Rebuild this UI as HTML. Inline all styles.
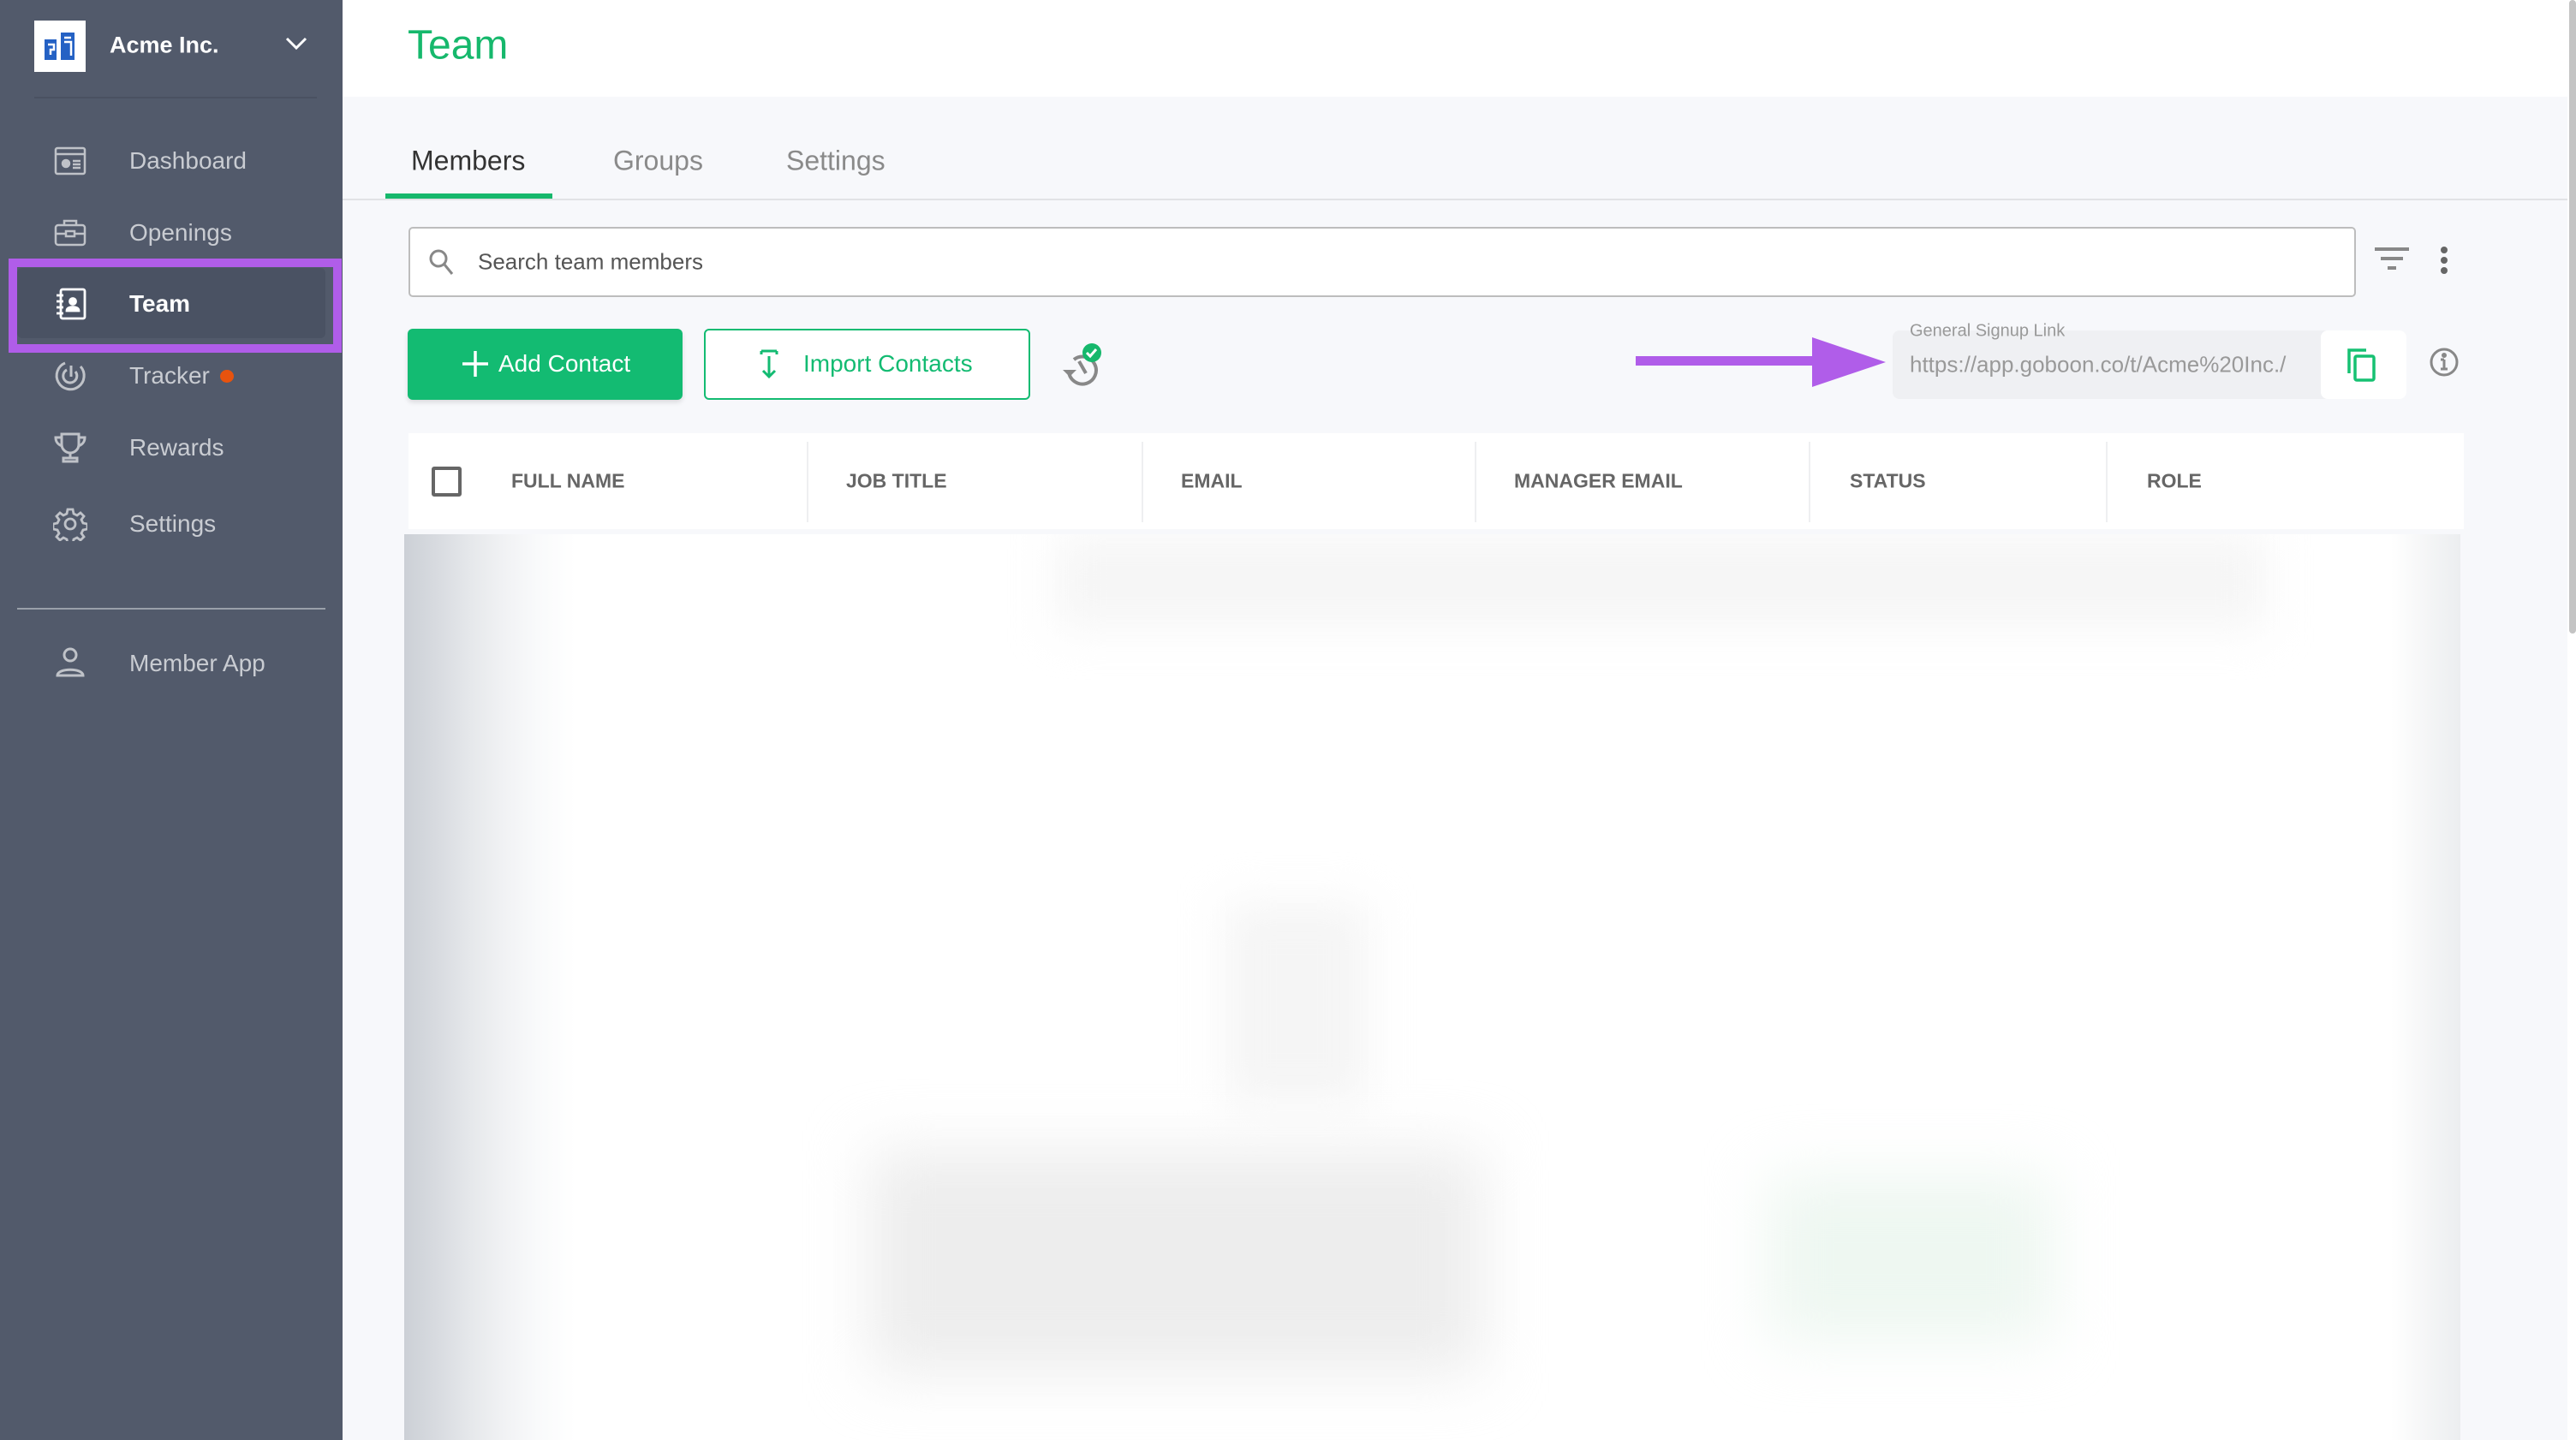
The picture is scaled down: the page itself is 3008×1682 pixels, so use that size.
<!DOCTYPE html>
<html><head><meta charset="utf-8"><style>
*{margin:0;padding:0;box-sizing:border-box}
body{width:3008px;height:1682px;overflow:hidden;background:#f7f8fb;font-family:"Liberation Sans",sans-serif;position:relative}
.a{position:absolute}
.sb{left:0;top:0;width:400px;height:1682px;background:#525a6b}
.nav{position:absolute;left:151px;font-size:28px;color:#c9ccd2;transform:translateY(-50%)}
.ic{position:absolute;left:62px;width:40px;height:40px;transform:translateY(-50%)}
.th{position:absolute;top:562px;font-size:23px;font-weight:bold;color:#666;transform:translateY(-50%)}
.dv{position:absolute;top:516px;width:2px;height:94px;background:#eeeff1}
</style></head><body>
<div class="a sb"></div>
<div class="a" style="left:40px;top:24px;width:60px;height:60px;background:#fff"></div>
<svg class="a" style="left:48px;top:30px" width="44" height="48" viewBox="0 0 44 48"><rect x="4" y="16" width="14" height="24" fill="#2461c4"/><rect x="23" y="8" width="16" height="32" fill="#2461c4"/><path d="M8 22h7v6h-4v6M27 14h8M27 19h8v16" stroke="#fff" stroke-width="2.5" fill="none"/></svg>
<div class="a" style="left:128px;top:53px;transform:translateY(-50%);font-size:27px;font-weight:bold;color:#fff">Acme Inc.</div>
<svg class="a" style="left:333px;top:42px" width="26" height="18"><path d="M2 3l11 11 11-11" stroke="#fff" stroke-width="3" fill="none"/></svg>
<div class="a" style="left:40px;top:113px;width:330px;height:2px;background:#4a5161"></div>
<div class="a" style="left:10px;top:302px;width:389px;height:110px;border:10px solid #b05de9"></div>
<div class="a" style="left:20px;top:313px;width:360px;height:82px;background:#4a5263;border-radius:6px"></div>
<svg class="ic" style="top:188px" viewBox="0 0 40 40" fill="none" stroke="#bfc2c8" stroke-width="2.5"><rect x="3" y="5" width="34" height="30" rx="2"/><path d="M3 12h34"/><circle cx="15" cy="23" r="4" fill="#bfc2c8"/><path d="M23 20h9M23 24h9M23 28h9"/></svg>
<div class="nav" style="top:188px">Dashboard</div>
<svg class="ic" style="top:272px" viewBox="0 0 40 40" fill="none" stroke="#bfc2c8" stroke-width="2.5"><rect x="3" y="11" width="34" height="23" rx="3"/><path d="M13 11V6h14v5M3 21h34"/><rect x="15" y="18" width="10" height="6" fill="#525a6b"/></svg>
<div class="nav" style="top:272px">Openings</div>
<svg class="ic" style="top:355px" viewBox="0 0 40 40" fill="none" stroke="#fff" stroke-width="2.8"><rect x="9" y="3" width="28" height="34" rx="2"/><path d="M4 10h8M4 17h8M4 24h8M4 31h8"/><circle cx="23" cy="17" r="3.5" fill="#fff"/><path d="M16 28c0-6 14-6 14 0z" fill="#fff"/></svg>
<div class="nav" style="top:355px;color:#fff;font-weight:bold">Team</div>
<svg class="ic" style="top:439px" viewBox="0 0 40 40" fill="none" stroke="#bfc2c8" stroke-width="3"><path d="M14 5A16 16 0 1 0 32 9"/><path d="M16 13A8 8 0 1 0 26 15"/><path d="M21 8v13"/></svg>
<div class="nav" style="top:439px">Tracker</div>
<div class="a" style="left:257px;top:432px;width:16px;height:15px;border-radius:50%;background:#e8530e"></div>
<svg class="ic" style="top:523px" viewBox="0 0 40 40" fill="none" stroke="#bfc2c8" stroke-width="3"><path d="M10 4h20v12a10 10 0 0 1-20 0z"/><path d="M10 8H3c0 6 4 9 8 10M30 8h7c0 6-4 9-8 10M20 26v6M12 36h16v-4H12z"/></svg>
<div class="nav" style="top:523px">Rewards</div>
<svg class="ic" style="top:612px" viewBox="0 0 40 40" fill="none" stroke="#bfc2c8" stroke-width="2.8"><path d="M17 3h6l1 5 4 2 4-3 4 4-3 4 2 4 5 1v6l-5 1-2 4 3 4-4 4-4-3-4 2-1 5h-6l-1-5-4-2-4 3-4-4 3-4-2-4-5-1v-6l5-1 2-4-3-4 4-4 4 3 4-2z"/><circle cx="20" cy="20" r="6"/></svg>
<div class="nav" style="top:612px">Settings</div>
<div class="a" style="left:20px;top:710px;width:360px;height:2px;background:#9aa0aa"></div>
<svg class="ic" style="top:774px" viewBox="0 0 40 40" fill="none" stroke="#bfc2c8" stroke-width="3"><circle cx="20" cy="11" r="7"/><path d="M5 35c0-9 30-9 30 0z"/></svg>
<div class="nav" style="top:775px">Member App</div>

<div class="a" style="left:400px;top:0;width:2598px;height:113px;background:#fff"></div>
<div class="a" style="left:476px;top:53px;transform:translateY(-50%);font-size:48px;color:#16b86c">Team</div>
<div class="a" style="left:480px;top:188px;transform:translateY(-50%);font-size:32px;color:#333">Members</div>
<div class="a" style="left:716px;top:188px;transform:translateY(-50%);font-size:32px;color:#8a8a8a">Groups</div>
<div class="a" style="left:918px;top:188px;transform:translateY(-50%);font-size:32px;color:#8a8a8a">Settings</div>
<div class="a" style="left:400px;top:232px;width:2598px;height:2px;background:#e2e3e6"></div>
<div class="a" style="left:450px;top:226px;width:195px;height:6px;background:#16b86c"></div>
<div class="a" style="left:477px;top:265px;width:2274px;height:82px;background:#fff;border:2px solid #bdbdbd;border-radius:5px"></div>
<svg class="a" style="left:500px;top:290px" width="32" height="34" fill="none" stroke="#888" stroke-width="3"><circle cx="12" cy="12" r="9"/><path d="M19 19l9 11"/></svg>
<div class="a" style="left:558px;top:306px;transform:translateY(-50%);font-size:26px;color:#555">Search team members</div>
<svg class="a" style="left:2773px;top:288px" width="40" height="30"><rect x="0" y="1" width="40" height="4" fill="#888"/><rect x="7" y="12" width="26" height="4" fill="#888"/><rect x="15" y="23" width="10" height="4" fill="#888"/></svg>
<svg class="a" style="left:2848px;top:286px" width="12" height="36" fill="#666"><circle cx="6" cy="6" r="4"/><circle cx="6" cy="18" r="4"/><circle cx="6" cy="30" r="4"/></svg>

<div class="a" style="left:476px;top:384px;width:321px;height:83px;background:#13bb72;border-radius:6px;box-shadow:0 3px 6px rgba(0,0,0,.12)"></div>
<svg class="a" style="left:540px;top:410px" width="30" height="30" stroke="#fff" stroke-width="3.5"><path d="M15 0v30M0 15h30"/></svg>
<div class="a" style="left:582px;top:425px;transform:translateY(-50%);font-size:28px;color:#fff">Add Contact</div>
<div class="a" style="left:822px;top:384px;width:381px;height:83px;background:#fff;border:2px solid #13bb72;border-radius:6px"></div>
<svg class="a" style="left:886px;top:408px" width="24" height="34" fill="none" stroke="#13bb72" stroke-width="3"><path d="M3 2h18M3 2v4M21 2v4M12 8v24M5 25l7 7 7-7"/></svg>
<div class="a" style="left:938px;top:425px;transform:translateY(-50%);font-size:28px;color:#13bb72">Import Contacts</div>
<svg class="a" style="left:1238px;top:398px" width="50" height="60" fill="none" stroke="#888" stroke-width="4"><path d="M10 36a16 16 0 1 0 6-14"/><path d="M3 34l8 8 8-8" fill="#888" stroke="none"/><path d="M22 24l8 14"/><circle cx="37" cy="14" r="11" fill="#16b86c" stroke="none"/><path d="M31 14l4 4 7-8" stroke="#fff" stroke-width="3"/></svg>

<svg class="a" style="left:1910px;top:394px" width="294" height="58"><rect x="0" y="22" width="210" height="11" fill="#b05de9"/><path d="M206 0l86 29-86 29z" fill="#b05de9"/></svg>
<div class="a" style="left:2210px;top:386px;width:600px;height:80px;background:#eff0f3;border-radius:8px"></div>
<div class="a" style="left:2710px;top:386px;width:100px;height:80px;background:#fff;border-radius:8px"></div>
<div class="a" style="left:2230px;top:387px;transform:translateY(-50%);font-size:20px;color:#999">General Signup Link</div>
<div class="a" style="left:2230px;top:426px;transform:translateY(-50%);font-size:26px;color:#999;width:462px;overflow:hidden;white-space:nowrap">https://app.goboon.co/t/Acme%20Inc./</div>
<svg class="a" style="left:2740px;top:406px" width="36" height="40" fill="none" stroke="#16c172" stroke-width="3.5"><path d="M3 30V3h20"/><rect x="10" y="10" width="22" height="28" rx="2"/></svg>
<svg class="a" style="left:2836px;top:405px" width="36" height="36" fill="none" stroke="#888" stroke-width="3"><circle cx="18" cy="18" r="15"/><path d="M18 15v11M14 26h8M14 15h4"/><circle cx="18" cy="10" r="1.5" fill="#888"/></svg>

<div class="a" style="left:477px;top:506px;width:2400px;height:112px;background:#fff"></div>
<div class="a" style="left:504px;top:545px;width:35px;height:35px;border:4px solid #666;border-radius:3px"></div>
<div class="th" style="left:597px">FULL NAME</div>
<div class="dv" style="left:942px"></div><div class="th" style="left:988px">JOB TITLE</div>
<div class="dv" style="left:1333px"></div><div class="th" style="left:1379px">EMAIL</div>
<div class="dv" style="left:1722px"></div><div class="th" style="left:1768px">MANAGER EMAIL</div>
<div class="dv" style="left:2112px"></div><div class="th" style="left:2160px">STATUS</div>
<div class="dv" style="left:2459px"></div><div class="th" style="left:2507px">ROLE</div>

<div class="a" style="left:472px;top:624px;width:2401px;height:1058px;background:#fff;overflow:hidden">
<div class="a" style="left:0;top:0;width:200px;height:1058px;background:linear-gradient(90deg,#ccd0d6 0,#d8dbe0 39px,#e6e8eb 78px,#f1f2f4 117px,#f9fafb 156px,#fff 200px)"></div>
<div class="a" style="left:2320px;top:0;width:81px;height:1058px;background:linear-gradient(90deg,#fff,#f3f4f5 60%,#eceef0)"></div>
<div class="a" style="left:760px;top:0;width:1414px;height:110px;background:#f6f6f6;filter:blur(25px)"></div>
<div class="a" style="left:543px;top:720px;width:716px;height:260px;background:#ededed;filter:blur(35px)"></div>
<div class="a" style="left:959px;top:431px;width:167px;height:235px;background:#f5f5f5;filter:blur(25px)"></div>
<div class="a" style="left:1592px;top:750px;width:333px;height:192px;background:#eef7f1;filter:blur(35px)"></div>
</div>
<div class="a" style="left:2998px;top:0;width:10px;height:1682px;background:#fff"></div>
<div class="a" style="left:3000px;top:0;width:8px;height:740px;background:#c4c4c4;border-radius:4px"></div>
</body></html>
